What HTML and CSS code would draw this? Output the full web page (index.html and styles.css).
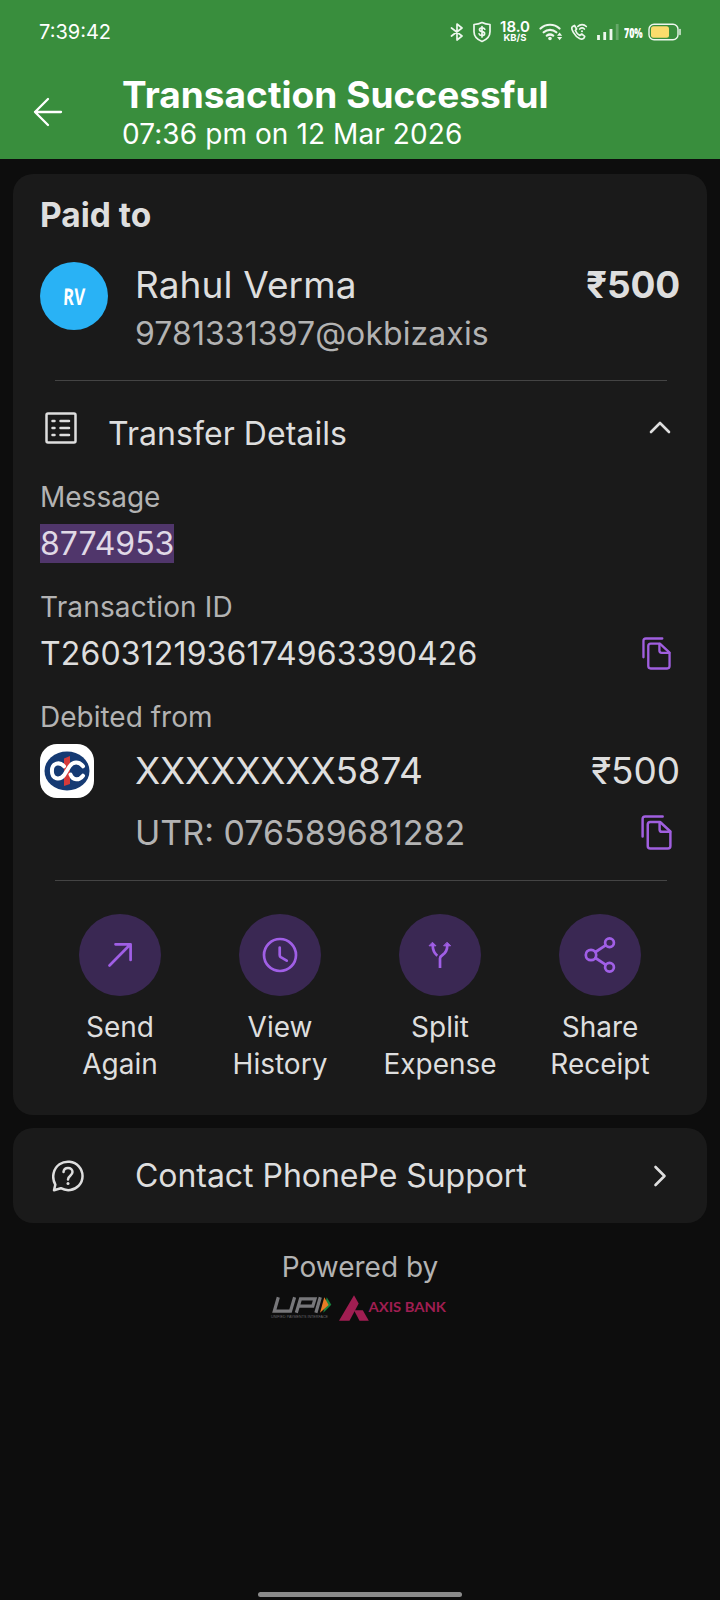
FILE: index.html
```html
<!DOCTYPE html>
<html lang="en">
<head>
<meta charset="utf-8">
<title>Transaction Successful</title>
<link rel="stylesheet" href="styles.css">
</head>
<body>
<div class="screen">
  <header class="header">
    <div class="status">
      <span class="clock">7:39:42</span>
      <div class="indicators">
        <svg class="ind-bt" width="14" height="18" viewBox="0 0 14 18"><path d="M1.500 5 12 13 7 17V1l5 4L1.500 13"/></svg>
        <svg class="ind-shield" width="20" height="22" viewBox="0 0 20 22"><path d="M10 1.500c2.600 1.400 5.200 1.900 8 2v7.200c0 4.600-3.400 7.900-8 9.800-4.600-1.900-8-5.200-8-9.800V3.500c2.800-.1 5.400-.6 8-2z"/><path d="M12.800 8.200C12.400 7.200 11.500 6.800 10 6.800c-3.300 0-3.400 3.200 0 3.800 3.600.5 3.300 3.900 0 3.900-1.700 0-2.600-.5-2.900-1.600M10 5.500v10.500"/></svg>
        <span class="speed"><b>18.0</b><i>KB/S</i></span>
        <svg class="ind-wifi" width="24" height="18" viewBox="0 0 24 18"><path d="M1.500 5.500c5.300-5 13.700-5 19 0M4.700 9.300c3.600-3.300 9-3.300 12.600 0M7.800 12.700c2-1.500 4.400-1.500 6.400 0"/><circle class="solid" cx="11" cy="15.500" r="1.800"/><path class="solid" d="M18 12.800l2.600-3.300 2.600 3.300zM18 14l2.600 3.300 2.600-3.300z"/></svg>
        <svg class="ind-call" width="18" height="18" viewBox="0 0 18 18"><path d="M4.500 2.500 2.300 3.800C.5 5.500 4.500 13 9.500 15.500c2 1 3.500.9 4.700-.7l.5-1.500-3-2.300-2 1.500C8 11.700 6.300 9.700 5.400 7.500l1.200-1.500z"/><path d="M7.800 3.500c2.400-2.400 6.100-2.400 8.500 0M9.700 6c1.400-1.300 3.300-1.300 4.700 0"/><circle class="solid" cx="12" cy="8.200" r="1"/></svg>
        <svg class="ind-signal" width="22" height="18" viewBox="0 0 22 18"><path d="M1.500 12v5M7.700 9v8M14 6v11"/><path class="faint" d="M20.200 1v16"/></svg>
        <span class="percent"><span class="percent-text">70%</span></span>
        <svg class="ind-battery" width="33" height="18" viewBox="0 0 33 18"><rect x="1" y="1.200" width="29" height="15.600" rx="5"/><rect class="charge" x="3" y="3.300" width="18" height="11.400" rx="2.500"/><path d="M32 6.500v5"/></svg>
      </div>
    </div>
    <div class="titlebar">
      <svg class="back" width="30" height="30" viewBox="0 0 30 30"><path d="M28 15H2M15 2 2 15l13 13"/></svg>
      <div class="titles">
        <h1 class="title">Transaction Successful</h1>
        <p class="subtitle">07:36 pm on 12 Mar 2026</p>
      </div>
    </div>
  </header>

  <main class="cards">
    <section class="card receipt">
      <h2 class="paid">Paid to</h2>
      <div class="payee">
        <span class="avatar"><span class="initials">RV</span></span>
        <div class="payee-text">
          <p class="name">Rahul Verma</p>
          <p class="vpa">9781331397@okbizaxis</p>
        </div>
        <span class="amount bold">₹500</span>
      </div>
      <hr class="rule">
      <div class="details-head">
        <svg class="list" width="32" height="32" viewBox="0 0 32 32"><rect x="1.500" y="1.500" width="29" height="29" rx="1.500"/><path d="M7.500 9h2M7.500 16h2M7.500 23h2M15.500 9h8.500M15.500 16h8.500M15.500 23h8.500"/></svg>
        <span class="details-title">Transfer Details</span>
        <svg class="chev-up" width="22" height="14" viewBox="0 0 22 14"><path d="M2 12l9-9 9 9"/></svg>
      </div>
      <p class="label">Message</p>
      <div class="value-row"><mark class="message">8774953</mark></div>
      <p class="label second">Transaction ID</p>
      <div class="value-row">
        <span class="txn">T2603121936174963390426</span>
        <svg class="copy first" width="29" height="33" viewBox="0 0 30 34"><path d="M1.500 21V4q0-2.500 2.500-2.500h17"/><path d="M9 6.800h9.500L28.500 16v14q0 2.500-2.500 2.500H9q-2.500 0-2.500-2.500V9.300Q6.500 6.800 9 6.800z"/><path d="M18 7v7q0 2.300 2.300 2.300h8"/></svg>
      </div>
      <p class="label third">Debited from</p>
      <div class="debit">
        <svg class="bank" width="54" height="54" viewBox="0 0 54 54"><rect width="54" height="54" rx="17" fill="#fff"/><ellipse cx="27" cy="27" rx="22.500" ry="19.500" fill="#153a73"/><path d="M24 14.500l6-2.500v28l-6 2z" fill="#d43a3a"/><path d="M43 22.300C39 17.200 33 17.300 29.500 22.500L24 31.300C20 36.500 11.900 35.500 11.900 27S20 17.500 24 22.300M30.500 30.500C33 36.700 39 36.800 43 31.700" fill="none" stroke="#fff" stroke-width="4"/></svg>
        <span class="account">XXXXXXXX5874</span>
        <span class="amount">₹500</span>
      </div>
      <div class="utr-row">
        <span class="utr">UTR: 076589681282</span>
        <svg class="copy" width="31" height="35" viewBox="0 0 30 34"><path d="M1.500 21V4q0-2.500 2.500-2.500h17"/><path d="M9 6.800h9.500L28.500 16v14q0 2.500-2.500 2.500H9q-2.500 0-2.500-2.500V9.300Q6.500 6.800 9 6.800z"/><path d="M18 7v7q0 2.300 2.300 2.300h8"/></svg>
      </div>
      <hr class="rule">
      <div class="actions">
        <div class="action"><span class="disc"><svg width="36" height="36" viewBox="0 0 36 36"><path d="M7.500 28.500 28 7.800M13.500 7.300H28.600V23"/></svg></span><span>Send<br>Again</span></div>
        <div class="action"><span class="disc"><svg width="36" height="36" viewBox="0 0 36 36"><circle cx="18" cy="18" r="16"/><path d="M17.700 10.500v7.500q0 1.500 1 2.200l6 3.500"/></svg></span><span>View<br>History</span></div>
        <div class="action"><span class="disc"><svg width="36" height="36" viewBox="0 0 36 36"><path class="butt" d="M18 31V21.500q0-2 2.500-3.500 4.800-3 4.800-10M10.700 8q0 7 4.600 10.700"/><path class="fill" d="m25.300 5.500 3.300 3.300h-6.600zM10.700 5.500l3.300 3.300h-6.600z"/></svg></span><span>Split<br>Expense</span></div>
        <div class="action"><span class="disc"><svg width="36" height="36" viewBox="0 0 36 36"><circle cx="9" cy="18" r="5.200"/><circle cx="27.500" cy="5.800" r="4.400"/><circle cx="27.500" cy="30.200" r="4.400"/><path d="m13.500 15 10-6.600M13.500 21l10 6.600"/></svg></span><span>Share<br>Receipt</span></div>
      </div>
    </section>

    <section class="card support">
      <svg class="help" width="32" height="32" viewBox="0 0 32 32"><path d="M2 30.200l1.300-5.500C-.8 17 1.500 8.500 7.500 4.300c6-4.200 14.500-3.300 19.300 2 5 5.600 5 14 0 19.400-4.700 5-12.200 5.800-18 2.500z"/><path d="M11.500 12c.3-2.800 2.200-4 4.500-4 2.700 0 4.500 1.700 4.500 4 0 3.800-4.500 3.600-4.500 7.500"/><circle class="dot" cx="16" cy="23.600" r="1.500"/></svg>
      <span class="support-text">Contact PhonePe Support</span>
      <svg class="chev-right" width="14" height="22" viewBox="0 0 14 22"><path d="M2.500 2l9 9-9 9"/></svg>
    </section>
  </main>

  <footer class="footer">
    <p class="powered">Powered by</p>
    <svg class="logos" width="180" height="27" viewBox="0 0 180 27">
      <path class="upi" d="M8.300 2.300 4.300 16.200H20.500L24.600 2.300M26.300 17.700 30.500 3.800H45L42.800 11.200H29M50.300 2.300 45.900 17.700"/>
      <path d="m56.700 2.300 4.600 7.400-8 8z" fill="#17833d"/>
      <path d="m54.300 2.300 4.300 7.700-8.600 7.700z" fill="#e67c26"/>
      <text class="upi-caption" x="1" y="22.600" textLength="57" lengthAdjust="spacingAndGlyphs">UNIFIED PAYMENTS INTERFACE</text>
      <path d="M84 .3 88.700 8.500 79.500 25.700H69z" fill="#a01e52"/>
      <path d="M84 15.200H92.800L98.800 25.700H89.500z" fill="#a01e52"/>
      <text class="axis" x="98.500" y="16.500" textLength="77.500" lengthAdjust="spacingAndGlyphs">AXIS BANK</text>
    </svg>
  </footer>
  <div class="nav-handle"></div>
</div>
</body>
</html>
```
FILE: styles.css
```css
* { box-sizing: border-box; margin: 0; padding: 0; }
body { background: #0d0d0d; color: #dedede; font-family: Inter, "Noto Sans", sans-serif; }
svg { display: block; fill: none; flex: none; stroke-linecap: round; stroke-linejoin: round; }
.screen { width: 720px; height: 1600px; display: flex; flex-direction: column; overflow: hidden; white-space: nowrap; }

.header { height: 159px; background: #398e3d; color: #fff; }
.status { height: 64px; padding: 0 39px 0 39px; display: flex; justify-content: space-between; align-items: center; }
.clock { font-size: 20px; line-height: 24px; }
.indicators { display: flex; align-items: center; }
.indicators svg { stroke: #eef7ee; stroke-width: 1.700; }
.indicators .solid { fill: #eef7ee; stroke: none; }
.ind-bt { margin-right: 8px; }
.ind-shield { margin-right: 8px; }
.speed { width: 30px; display: flex; flex-direction: column; align-items: center; margin-right: 9px; }
.speed b { font-size: 15px; line-height: 12px; font-weight: 600; }
.speed i { font-size: 9.500px; line-height: 10px; font-style: normal; font-weight: 700; }
.indicators .ind-wifi { stroke-width: 2.200; margin-right: 7px; }
.ind-call { margin-right: 9px; }
.indicators .ind-signal { stroke-width: 2.800; margin-right: 5px; stroke-linecap: butt; }
.faint { opacity: .25; }
.percent { width: 19px; margin-right: 5px; }
.percent-text { display: inline-block; font: 800 14px/16px "Open Sans", sans-serif; transform: scaleX(.63); transform-origin: 0 50%; }
.indicators .ind-battery { stroke-width: 1.400; }
.indicators .charge { fill: #fbdc6c; stroke: none; }
.titlebar { display: flex; }
.back { margin: 32.500px 0 0 33px; stroke: #fff; stroke-width: 2.300; }
.titles { margin-left: 59px; padding-top: 8px; }
.title { font-size: 37px; line-height: 45px; font-weight: 700; letter-spacing: .04px; }
.subtitle { font-size: 28px; line-height: 34px; letter-spacing: .09px; }

.cards { padding: 15px 13px 0; display: flex; flex-direction: column; gap: 13px; }
.card { background: #1a1a1a; border-radius: 20px; }
.receipt { height: 941px; padding: 0 27px; }
.paid { padding-top: 21px; font-size: 33.500px; line-height: 40px; font-weight: 700; }
.payee { display: flex; align-items: flex-start; height: 145px; padding-top: 27px; }
.avatar { width: 68px; height: 68px; border-radius: 50%; background: #29b2f5; color: #fff; display: flex; align-items: center; justify-content: center; }
.initials { font: 700 23px/26px "Open Sans", Inter, sans-serif; transform: scaleX(.72) skewX(-4deg); }
.payee-text { margin-left: 27px; flex: 1; }
.name { padding-top: 1px; font-size: 37px; line-height: 44px; letter-spacing: .1px; }
.vpa { margin-top: 1px; font-size: 32px; line-height: 52px; letter-spacing: .08px; color: #b3b3b3; }
.amount { font-size: 37px; line-height: 44px; letter-spacing: -.1px; }
.bold { padding-top: 1px; font-size: 37px; letter-spacing: -.2px; font-weight: 700; }
.rule { border: 0; height: 1px; margin: 0 13px 0 15px; background: #444; }
.details-head { height: 94px; display: flex; align-items: flex-start; padding: 31px 9px 0 5px; }
.list { stroke: #dedede; stroke-width: 2.500; }
.details-title { flex: 1; margin-left: 31px; padding-top: 2px; font-size: 32px; line-height: 40px; letter-spacing: .06px; }
.chev-up { margin-top: 8px; stroke: #dedede; stroke-width: 2.600; }
.label { padding-top: 5px; font-size: 28px; line-height: 34px; color: #b3b3b3; }
.second { padding-top: 10px; margin-top: 15px; letter-spacing: .16px; }
.third { padding-top: 10px; margin-top: 15px; }
.value-row { margin-top: 10px; height: 41px; display: flex; align-items: flex-start; justify-content: space-between; font-size: 32px; line-height: 39px; padding-right: 9px; }
.message { background: #50366b; color: #e0d9e6; letter-spacing: -.03px; }
.txn { letter-spacing: .14px; }
.copy { stroke: #a05fdf; stroke-width: 2.400; }
.first { margin-top: 3px; }
.debit { display: flex; align-items: center; height: 54px; margin-top: 10px; }
.account { flex: 1; margin-left: 41px; font-size: 37px; line-height: 44px; letter-spacing: -.18px; }
.utr-row { display: flex; justify-content: space-between; align-items: center; height: 82px; padding: 0 8px 14px 95px; font-size: 34px; color: #b3b3b3; }
.actions { display: grid; grid-template-columns: repeat(4, 160px); padding-top: 33px; }
.action { display: flex; flex-direction: column; align-items: center; gap: 13px; font-size: 28px; line-height: 37px; text-align: center; }
.disc { width: 82px; height: 82px; border-radius: 50%; background: #3a2853; display: flex; align-items: center; justify-content: center; stroke: #a05fe6; stroke-width: 2.700; }
.butt { stroke-linecap: butt; }
.fill { fill: #a05fe6; stroke-width: 1; }
.support { height: 95px; padding: 0 40px 0 39px; display: flex; align-items: center; }
.help { stroke: #dedede; stroke-width: 2.500; }
.dot { fill: #dedede; stroke: none; }
.support-text { flex: 1; margin-left: 51px; font-size: 32px; line-height: 40px; letter-spacing: -.04px; }
.chev-right { stroke: #dedede; stroke-width: 2.600; }

.footer { display: flex; flex-direction: column; align-items: center; padding-top: 27px; }
.powered { font-size: 28px; line-height: 34px; color: #b3b3b3; }
.logos { margin-top: 11px; }
.upi { stroke: #77777a; stroke-width: 3.200; stroke-linecap: butt; stroke-linejoin: miter; }
.upi-caption { font: 4px "Liberation Sans", sans-serif; fill: #66666a; }
.axis { font: 700 12.500px Lato, sans-serif; fill: #a01e52; }
.nav-handle { width: 204px; height: 5px; margin: auto auto 3px; border-radius: 3px; background: #8b8b8b; }
```
